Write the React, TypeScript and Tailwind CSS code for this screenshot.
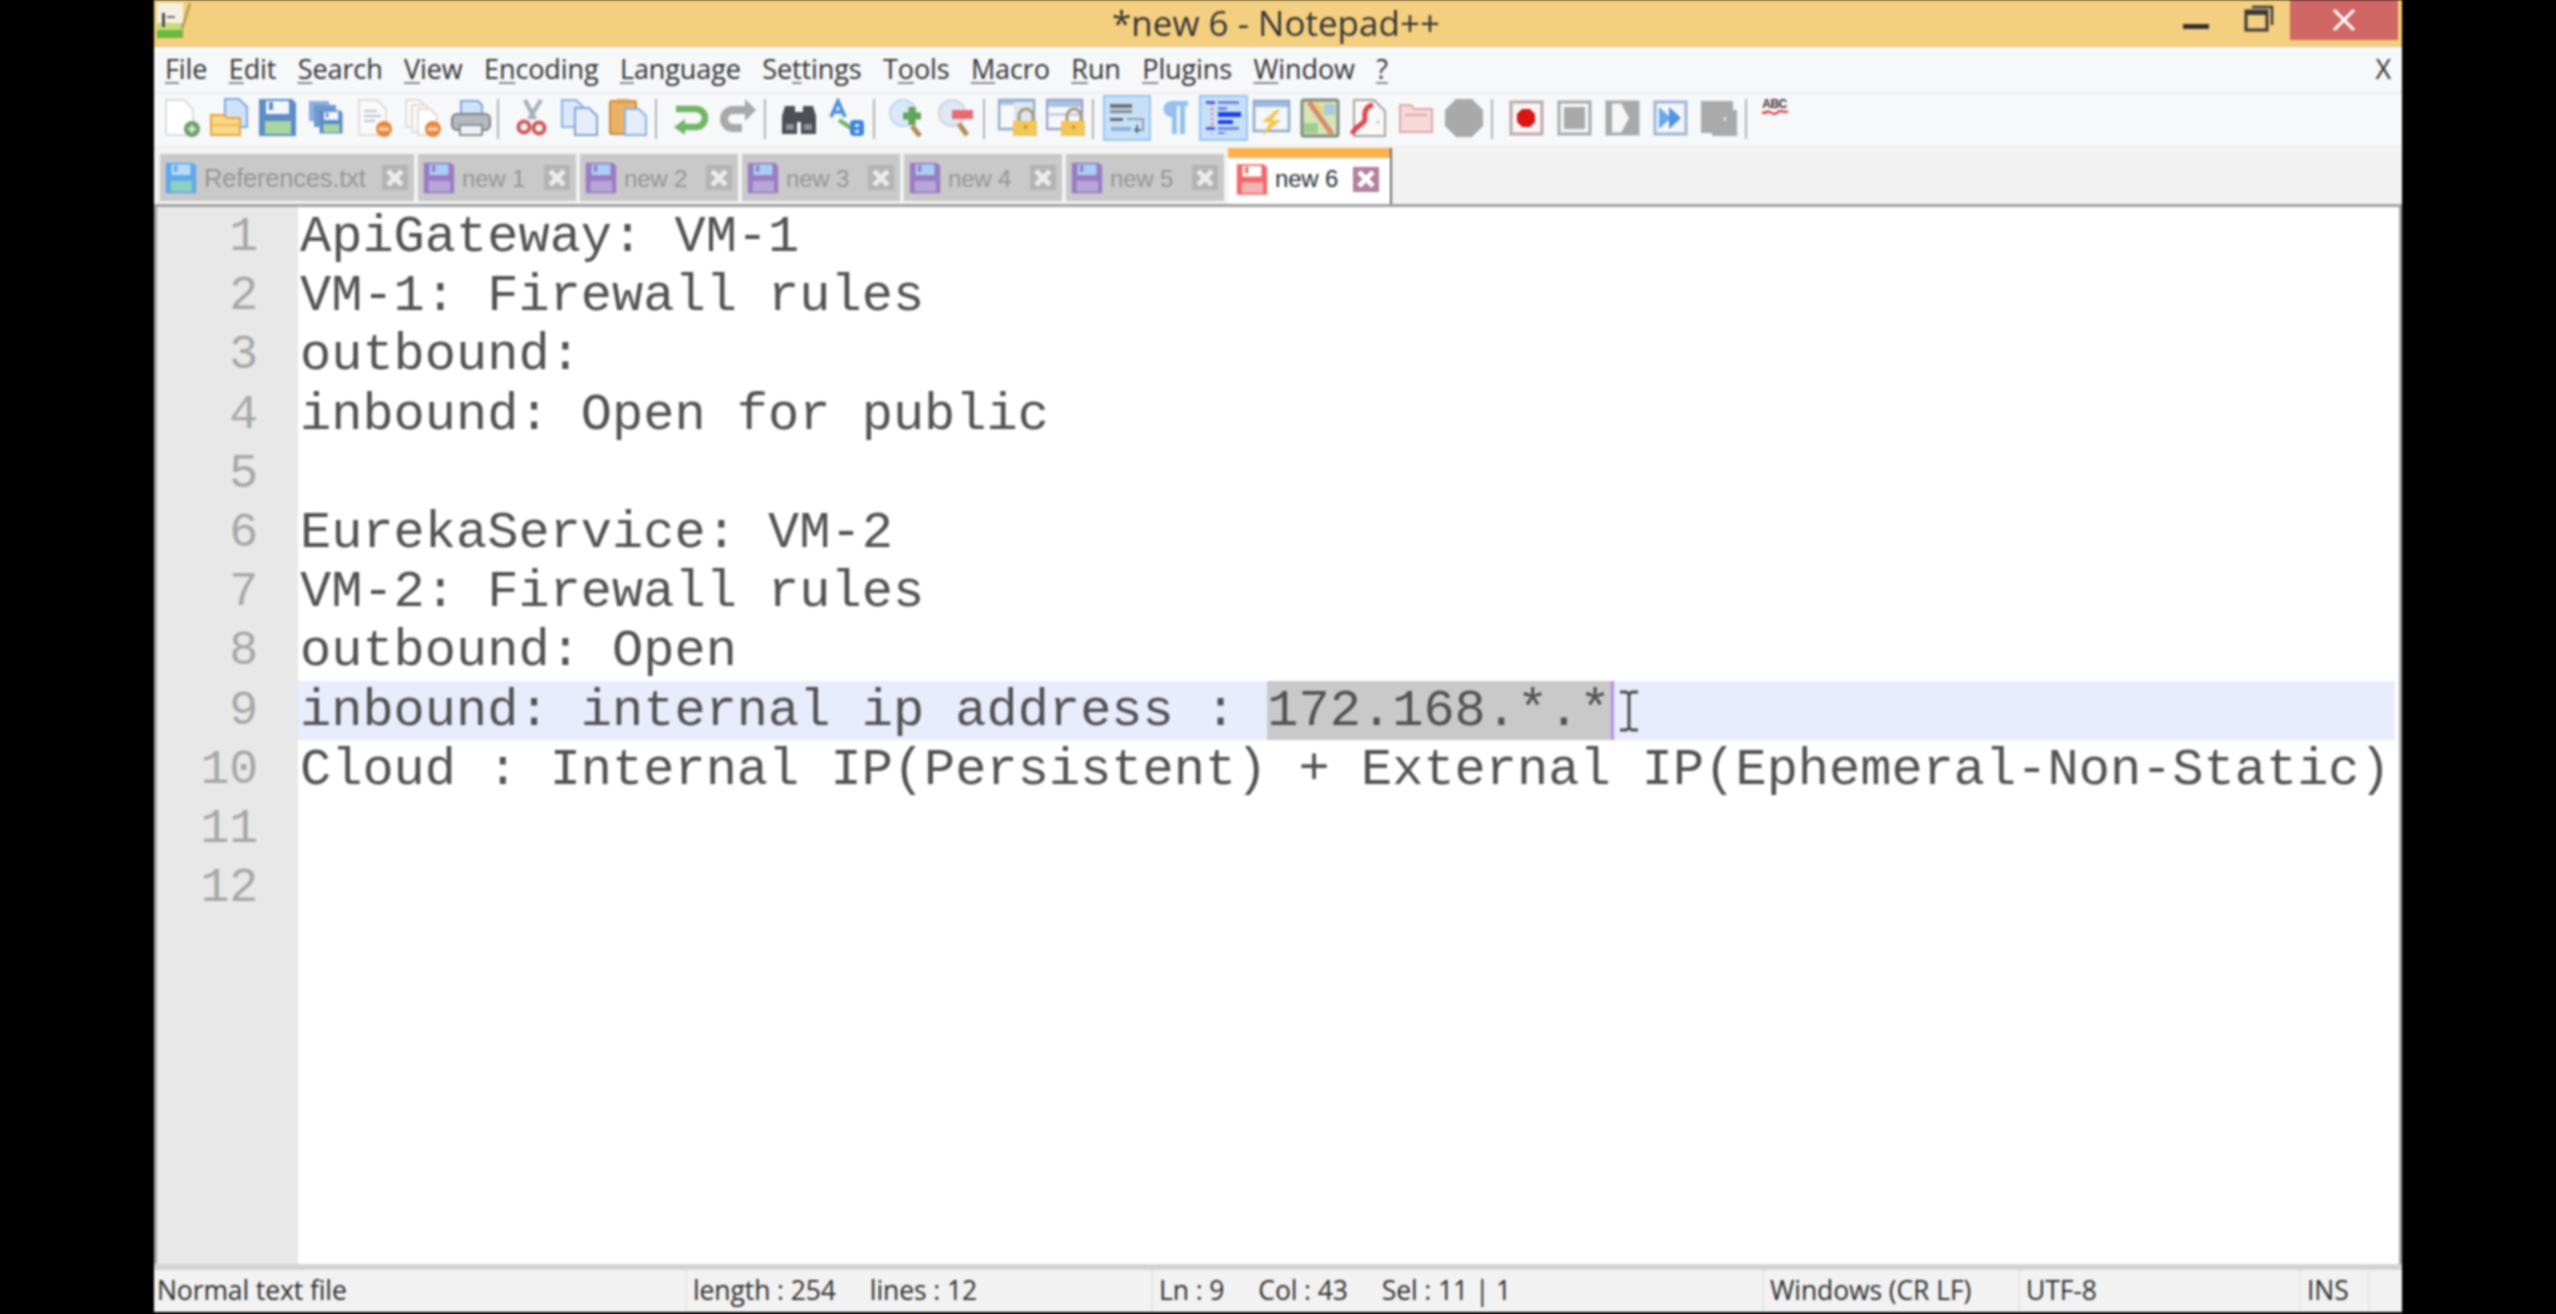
import type { ReactNode } from 'react'

const UI_FONT = "font-['Open_Sans','Noto_Sans',sans-serif]"

const MENUS: [string, string, string][] = [
  ['', 'F', 'ile'],
  ['', 'E', 'dit'],
  ['', 'S', 'earch'],
  ['', 'V', 'iew'],
  ['E', 'n', 'coding'],
  ['', 'L', 'anguage'],
  ['Se', 't', 'tings'],
  ['T', 'o', 'ols'],
  ['', 'M', 'acro'],
  ['', 'R', 'un'],
  ['', 'P', 'lugins'],
  ['', 'W', 'indow'],
  ['', '?', ''],
]

const LINES = [
  'ApiGateway: VM-1',
  'VM-1: Firewall rules',
  'outbound:',
  'inbound: Open for public',
  '',
  'EurekaService: VM-2',
  'VM-2: Firewall rules',
  'outbound: Open',
  null,
  'Cloud : Internal IP(Persistent) + External IP(Ephemeral-Non-Static)',
  '',
  '',
]

function Icon({ children }: { children: ReactNode }) {
  return (
    <svg width="40" height="40" viewBox="0 0 40 40" fill="none">
      {children}
    </svg>
  )
}

function Slot({ children, active }: { children: ReactNode; active?: boolean }) {
  return (
    <div
      className={`w-[48.2px] h-[46px] shrink-0 flex items-center justify-center ${
        active ? 'bg-[#c7e0f8] border-2 border-[#93c8f6]' : ''
      }`}
    >
      {children}
    </div>
  )
}

function Sep() {
  return <div className="w-[2px] h-[40px] mt-[4px] ml-[2px] mr-[9px] shrink-0 bg-[#b4b4b4]" />
}

function Floppy({ body, label, line }: { body: string; label: string; line: string }) {
  return (
    <>
      <path d="M1 1H34L38 5V38H1Z" fill={body} />
      <rect x="8" y="3" width="23" height="13" fill={label} />
      <rect x="11" y="4" width="4" height="8" fill={body} />
      <rect x="7" y="23" width="26" height="13" fill={line} />
    </>
  )
}

function PageShape({ x, y, w, h, fill, stroke }: { x: number; y: number; w: number; h: number; fill: string; stroke: string }) {
  const c = Math.round(w * 0.35)
  return (
    <path
      d={`M${x} ${y}H${x + w - c}L${x + w} ${y + c}V${y + h}H${x}Z`}
      fill={fill}
      stroke={stroke}
      strokeWidth="2"
    />
  )
}

function Lock() {
  return (
    <>
      <path d="M21 23V18A7 7 0 0 1 35 18V23" stroke="#a89a78" strokeWidth="3" fill="none" />
      <rect x="15" y="23" width="24" height="15" fill="#f3c659" />
      <rect x="26" y="27" width="3" height="4" fill="#c79a3a" />
    </>
  )
}

function Frame({ stroke, children }: { stroke: string; children: ReactNode }) {
  return (
    <Icon>
      <rect x="5" y="4" width="31" height="32" fill="#f6f6f6" stroke={stroke} strokeWidth="3" />
      {children}
    </Icon>
  )
}

function Toolbar() {
  return (
    <div className="h-[51px] bg-[#f6f8fa] flex items-start pl-[3.7px] pt-[1px] shrink-0">
      <Slot>
        <Icon>
          <PageShape x={4} y={2} w={27} h={35} fill="#ffffff" stroke="#dcdcdc" />
          <circle cx="30" cy="31" r="8" fill="#6f9f6a" />
          <path d="M30 27V35M26 31H34" stroke="#d9ecd5" strokeWidth="2.5" />
        </Icon>
      </Slot>
      <Slot>
        <Icon>
          <PageShape x={15} y={1} w={22} h={28} fill="#cfe2f8" stroke="#7fa9dc" />
          <path d="M1 17H14L17 20H30V37H1Z" fill="#f7d987" stroke="#e8a33c" strokeWidth="2" />
          <path d="M2 27H30" stroke="#eeb95d" strokeWidth="2" />
        </Icon>
      </Slot>
      <Slot>
        <Icon>
          <Floppy body="#5d8dc8" label="#f4f8fd" line="#a9d6a0" />
        </Icon>
      </Slot>
      <Slot>
        <Icon>
          <rect x="3" y="3" width="20" height="20" fill="#8fb0da" />
          <rect x="8" y="7" width="22" height="22" fill="#6f99cf" />
          <g transform="translate(13 12) scale(0.62)">
            <Floppy body="#5d8dc8" label="#f4f8fd" line="#a9d6a0" />
          </g>
        </Icon>
      </Slot>
      <Slot>
        <Icon>
          <PageShape x={4} y={2} w={27} h={35} fill="#fafafa" stroke="#e2dcd8" />
          <path d="M9 13H22M9 18H26M9 23H20" stroke="#b9c4d2" strokeWidth="2" />
          <circle cx="29" cy="31" r="8" fill="#e68a3c" />
          <rect x="24" y="29" width="10" height="4" fill="#f5c9a0" />
        </Icon>
      </Slot>
      <Slot>
        <Icon>
          <PageShape x={3} y={2} w={20} h={27} fill="#fafafa" stroke="#e2dcd8" />
          <PageShape x={9} y={7} w={20} h={27} fill="#fafafa" stroke="#e2dcd8" />
          <PageShape x={15} y={11} w={19} h={26} fill="#ffffff" stroke="#e2dcd8" />
          <circle cx="30" cy="31" r="8" fill="#e68a3c" />
          <rect x="25" y="29" width="10" height="4" fill="#f5c9a0" />
        </Icon>
      </Slot>
      <Slot>
        <Icon>
          <path d="M10 16V3H27L31 7V16Z" fill="#cfe2f8" stroke="#7fa9dc" strokeWidth="2" />
          <rect x="1" y="16" width="38" height="16" rx="5" fill="#b5b8bc" stroke="#7d8084" strokeWidth="2" />
          <rect x="9" y="27" width="22" height="10" fill="#eef2f6" stroke="#8d9096" strokeWidth="2" />
        </Icon>
      </Slot>
      <Sep />
      <Slot>
        <Icon>
          <path d="M17 21L29 2M23 21L13 2" stroke="#a8afb8" strokeWidth="4" />
          <circle cx="12" cy="29" r="5.5" stroke="#cf5b57" strokeWidth="4" />
          <circle cx="27" cy="30" r="5.5" stroke="#cf5b57" strokeWidth="4" />
        </Icon>
      </Slot>
      <Slot>
        <Icon>
          <PageShape x={2} y={2} w={21} h={27} fill="#dbe8f8" stroke="#8fb2de" />
          <PageShape x={15} y={10} w={22} h={27} fill="#e6eff9" stroke="#7fa6d6" />
        </Icon>
      </Slot>
      <Slot>
        <Icon>
          <rect x="2" y="3" width="26" height="33" rx="2" fill="#eab265" stroke="#c98a3c" strokeWidth="2" />
          <rect x="9" y="1" width="12" height="5" fill="#d9a458" />
          <PageShape x={17} y={11} w={21} h={26} fill="#e3eefa" stroke="#8fb2de" />
        </Icon>
      </Slot>
      <Sep />
      <Slot>
        <Icon>
          <path d="M6 11H26A9 9 0 0 1 26 29H13" stroke="#6fb765" strokeWidth="6.5" fill="none" />
          <path d="M15 21L4 29L15 37Z" fill="#6fb765" />
        </Icon>
      </Slot>
      <Slot>
        <Icon>
          <path d="M33 12H15A9 9 0 0 0 15 30H24" stroke="#a8a8a8" strokeWidth="8" fill="none" />
          <path d="M27 1L38 12L27 23Z" fill="#a8a8a8" />
        </Icon>
      </Slot>
      <Sep />
      <Slot>
        <Icon>
          <path d="M6 8H16V14H24V8H34L37 18V36H22V24H18V36H3V18Z" fill="#4c5054" />
          <rect x="7" y="26" width="8" height="6" fill="#8d9195" />
          <rect x="25" y="26" width="8" height="6" fill="#8d9195" />
        </Icon>
      </Slot>
      <Slot>
        <Icon>
          <path d="M4 19L11 3L18 19M7 14H15" stroke="#4f90dc" strokeWidth="3.5" />
          <path d="M12 22L24 30" stroke="#6fb765" strokeWidth="4" />
          <rect x="23" y="22" width="14" height="16" rx="4" fill="#3f86d8" />
          <rect x="28" y="26" width="4" height="3" fill="#dbe8f8" />
          <rect x="28" y="32" width="4" height="3" fill="#dbe8f8" />
        </Icon>
      </Slot>
      <Sep />
      <Slot>
        <Icon>
          <circle cx="15" cy="15" r="13" fill="#d9e9f9" stroke="#bcd8f3" strokeWidth="2" />
          <path d="M24 28L32 38" stroke="#b58d52" strokeWidth="5" />
          <path d="M24 9V27M15 18H33" stroke="#5fa658" strokeWidth="7" />
        </Icon>
      </Slot>
      <Slot>
        <Icon>
          <circle cx="15" cy="15" r="13" fill="#dde9f6" stroke="#d8cfd8" strokeWidth="2" />
          <path d="M22 26L30 37" stroke="#b58d52" strokeWidth="5" />
          <rect x="15" y="12" width="21" height="9" fill="#ea6a72" />
        </Icon>
      </Slot>
      <Sep />
      <Slot>
        <Icon>
          <rect x="1" y="2" width="35" height="29" fill="#f6f9fd" stroke="#8ea9cc" strokeWidth="2.5" />
          <rect x="2" y="3" width="33" height="4" fill="#a9c3e2" />
          <rect x="16" y="4" width="19" height="22" fill="#dde6f1" />
          <Lock />
        </Icon>
      </Slot>
      <Slot>
        <Icon>
          <rect x="1" y="2" width="35" height="29" fill="#f6f9fd" stroke="#9b9fcc" strokeWidth="2.5" />
          <rect x="2" y="3" width="33" height="6" fill="#a9c3e2" />
          <rect x="2" y="15" width="33" height="3" fill="#c9cfe6" />
          <Lock />
        </Icon>
      </Slot>
      <Sep />
      <Slot active>
        <Icon>
          <rect x="3" y="6" width="22" height="4" fill="#707070" />
          <rect x="3" y="12" width="22" height="3" fill="#8a8a8a" />
          <rect x="3" y="20" width="13" height="3" fill="#6a6a6a" />
          <path d="M20 21H36V32H30" stroke="#8a9fb4" strokeWidth="2" />
          <path d="M4 31H24" stroke="#8fb0d8" strokeWidth="4" />
          <path d="M30 27V35M27 32H33" stroke="#5a6a7a" strokeWidth="2" />
        </Icon>
      </Slot>
      <Slot>
        <Icon>
          <path d="M16 3H33V8H30V36H25V8H22V36H17V19A8 8 0 0 1 16 3Z" fill="#94c2ee" />
        </Icon>
      </Slot>
      <Slot active>
        <Icon>
          <path d="M8 5V36" stroke="#e8607c" strokeWidth="2" strokeDasharray="2 3" />
          <rect x="2" y="3" width="9" height="3" fill="#5560d8" />
          <rect x="14" y="3" width="21" height="3" fill="#6f8ae0" />
          <rect x="14" y="9" width="9" height="3" fill="#6f8ae0" />
          <rect x="14" y="14" width="23" height="5" fill="#1f3fe8" />
          <rect x="14" y="22" width="15" height="4" fill="#1f3fe8" />
          <rect x="2" y="29" width="9" height="3" fill="#5560d8" />
          <rect x="14" y="29" width="21" height="3" fill="#6f8ae0" />
          <rect x="14" y="34" width="7" height="2" fill="#6f8ae0" />
        </Icon>
      </Slot>
      <Slot>
        <Icon>
          <rect x="2" y="3" width="35" height="30" fill="#f3f6fa" stroke="#8ea9cc" strokeWidth="2.5" />
          <rect x="3" y="4" width="33" height="5" fill="#9dbde2" />
          <path d="M24 12L10 24H18L10 38L29 22H20L28 12Z" fill="#f0c850" />
        </Icon>
      </Slot>
      <Slot>
        <Icon>
          <rect x="2" y="2" width="36" height="36" rx="2" fill="#d8e4b8" stroke="#7f8a80" strokeWidth="3" />
          <path d="M9 4L32 36" stroke="#d88a6a" strokeWidth="5" />
          <rect x="24" y="6" width="11" height="11" fill="#a7cbe4" />
          <rect x="4" y="25" width="14" height="10" fill="#9ccf8a" />
          <path d="M16 5L24 15" stroke="#f0d060" strokeWidth="3" />
        </Icon>
      </Slot>
      <Slot>
        <Icon>
          <PageShape x={6} y={2} w={31} h={36} fill="#fbf9f7" stroke="#a8a4a4" />
          <path d="M25 7C18 8 16 14 17 20S9 26 4 36" stroke="#d84a52" strokeWidth="5" fill="none" />
          <circle cx="30" cy="24" r="1.5" fill="#a8c8a0" />
        </Icon>
      </Slot>
      <Slot>
        <Icon>
          <path d="M4 7H15L18 11H36V34H4Z" fill="#f6dada" stroke="#e3a6a6" strokeWidth="2" />
          <path d="M9 17H31" stroke="#e3a6a6" strokeWidth="2" />
        </Icon>
      </Slot>
      <Slot>
        <Icon>
          <path d="M12 1H28L39 12V28L28 39H12L1 28V12Z" fill="#a9a9a9" />
        </Icon>
      </Slot>
      <Sep />
      <Slot>
        <Frame stroke="#bda9a6">
          <path d="M16 11H24L29 16V24L24 29H16L11 24V16Z" fill="#dc1414" />
        </Frame>
      </Slot>
      <Slot>
        <Frame stroke="#a9a9a9">
          <rect x="10" y="9" width="21" height="22" fill="#a9a9a9" />
        </Frame>
      </Slot>
      <Slot>
        <Frame stroke="#a9a9a9">
          <rect x="5" y="5" width="5" height="30" fill="#a9a9a9" />
          <path d="M19 5H36V35H19L27 20Z" fill="#a9a9a9" />
        </Frame>
      </Slot>
      <Slot>
        <Frame stroke="#9db5d8">
          <path d="M9 9L21 20L9 31Z" fill="#6aa8ee" />
          <path d="M19 9L31 20L19 31Z" fill="#4f94e6" />
        </Frame>
      </Slot>
      <Slot>
        <Icon>
          <path d="M3 3H35V12H39V38H14V35H3Z" fill="#aaaaaa" />
          <rect x="26" y="19" width="2" height="4" fill="#eeeeee" />
        </Icon>
      </Slot>
      <Sep />
      <div className="w-[26px] h-[46px] ml-[6px] shrink-0 flex flex-col items-center pt-[3px]">
        <span className="font-['Liberation_Sans',sans-serif] font-bold text-[12px] leading-[12px] tracking-[-0.5px] text-[#44333a]">
          ABC
        </span>
        <svg width="26" height="5" viewBox="0 0 26 5" fill="none">
          <path d="M0 2C3 5 5 0 8 2S13 5 16 2S22 4 26 1" stroke="#e0282c" strokeWidth="2" />
        </svg>
      </div>
    </div>
  )
}

function TabClose({ active }: { active?: boolean }) {
  return (
    <div
      className={`w-[26px] h-[25px] shrink-0 flex items-center justify-center ${
        active ? 'bg-[#b57f9e]' : 'bg-[#b4b4b4]'
      }`}
    >
      <svg width="20" height="20" viewBox="0 0 20 20" fill="none">
        <path d="M3 3L17 17M17 3L3 17" stroke={active ? '#ffffff' : '#ececec'} strokeWidth="5" />
      </svg>
    </div>
  )
}

function Tab({ name, wide, body, label, line }: { name: string; wide?: boolean; body: string; label: string; line: string }) {
  return (
    <div
      className={`h-[47px] shrink-0 bg-[#c9c9c9] flex items-center pl-[5px] pr-[6px] mt-[9px] ${
        wide ? 'w-[254px]' : 'w-[158px]'
      }`}
    >
      <svg width="32" height="32" viewBox="0 0 39 39" fill="none" className="shrink-0">
        <Floppy body={body} label={label} line={line} />
      </svg>
      <span className={`ml-[7px] mt-[2px] flex-1 tracking-[-0.2px] whitespace-pre text-[#969696] ${wide ? 'text-[25.5px]' : 'text-[24px]'}`}>
        {name}
      </span>
      <TabClose />
    </div>
  )
}

function TabBar() {
  return (
    <div className="h-[59px] bg-[#f2f2f2] flex pl-[6px] gap-[4px] shrink-0 font-['Liberation_Sans',sans-serif]">
      <Tab name="References.txt" wide body="#5fa9ec" label="#b7dcfa" line="#8ccfc4" />
      {['new 1', 'new 2', 'new 3', 'new 4', 'new 5'].map(n => (
        <Tab key={n} name={n} body="#9a7cc4" label="#a9d0f4" line="#b9a6d8" />
      ))}
      <div className="w-[164px] h-[56px] mt-[3px] shrink-0 flex flex-col bg-white border-r-2 border-[#6e6e6e]">
        <div className="h-[10px] bg-[#fbb14d] shrink-0" />
        <div className="flex-1 flex items-center pl-[8px] pb-[4px]">
          <svg width="32" height="33" viewBox="0 0 39 39" fill="none" className="shrink-0">
            <Floppy body="#ee6a6c" label="#ffffff" line="#f6b3b3" />
          </svg>
          <span className="ml-[7px] text-[24px] tracking-[-0.2px] text-[#2b3440]">new 6</span>
          <div className="ml-[15px]">
            <TabClose active />
          </div>
        </div>
      </div>
    </div>
  )
}

function Editor() {
  return (
    <div className="flex-1 min-h-0 flex bg-white border-t-[3px] border-x-[3px] border-[#a3a3a3] font-['Liberation_Mono',monospace] relative">
      <div className="w-[141px] shrink-0 bg-[#e8e8e8] pr-[40px] text-right text-[48px] leading-[61px] text-[#a8a8a8]">
        {LINES.map((_, i) => (
          <div key={i} className="h-[59.2px]">
            {i + 1}
          </div>
        ))}
      </div>
      <div className="flex-1 min-w-0 text-[52px] leading-[61px] text-[#525252] whitespace-pre">
        {LINES.map((l, i) =>
          l === null ? (
            <div key={i} className="h-[59.2px] bg-[#e9ecfd] mr-[4px] pl-[2px] flex">
              <span>inbound: internal ip address : </span>
              <span className="h-[59.2px] bg-[#c9c9c9] border-r-[3px] border-[#b68ef0] -mr-[3px]">172.168.*.*</span>
            </div>
          ) : (
            <div key={i} className="h-[59.2px] pl-[2px]">
              {l}
            </div>
          ),
        )}
      </div>
      <svg
        width="20"
        height="42"
        viewBox="0 0 20 42"
        fill="none"
        className="absolute left-[1462px] top-[483px]"
      >
        <path d="M1 2H7L10 4L13 2H19M1 40H7L10 38L13 40H19M10 4V38" stroke="#4a4a44" strokeWidth="3" />
      </svg>
    </div>
  )
}

function StatusCell({ w, children }: { w: string; children: ReactNode }) {
  return (
    <div className={`${w} h-full shrink-0 border-l-2 border-[#e6e6e6] pl-[6px] flex items-center whitespace-pre`}>
      {children}
    </div>
  )
}

function StatusBar() {
  return (
    <div className={`h-[42px] shrink-0 bg-[#f2f2f2] border-t-[6px] border-[#d4d4d4] box-content flex items-center text-[26.5px] tracking-[-0.1px] text-[#2e2e2e] ${UI_FONT}`}>
      <div className="w-[531px] shrink-0 pl-[3px]">Normal text file</div>
      <StatusCell w="w-[466px]">length : 254     lines : 12</StatusCell>
      <StatusCell w="w-[611px]">Ln : 9     Col : 43     Sel : 11 | 1</StatusCell>
      <StatusCell w="w-[256px]">Windows (CR LF)</StatusCell>
      <StatusCell w="w-[281px]">UTF-8</StatusCell>
      <StatusCell w="w-[69px]">INS</StatusCell>
      <div className="flex-1 h-full border-l-2 border-[#e6e6e6]" />
    </div>
  )
}

export default function App() {
  return (
    <div className="w-[2556px] h-[1314px] bg-black flex justify-center overflow-hidden">
      <div className="w-[2248px] h-[1312px] flex flex-col bg-white blur-[0.8px]">
        <div className={`h-[47px] shrink-0 bg-[#f3cf7f] border-b border-[#e6c274] flex items-start relative ${UI_FONT}`}>
          <svg width="38" height="38" viewBox="0 0 38 38" fill="none" className="ml-[2px] mt-[1px]">
            <rect x="1" y="2" width="26" height="35" fill="#f4f1e4" />
            <rect x="1" y="28" width="26" height="9" fill="#6cb83c" />
            <rect x="1" y="22" width="26" height="7" fill="#c6dc78" />
            <rect x="6" y="12" width="3" height="14" fill="#4a4a4a" />
            <rect x="11" y="15" width="8" height="2" fill="#6a6a6a" />
            <path d="M34 2L26 28" stroke="#b89a4a" strokeWidth="2.5" />
          </svg>
          <div className="absolute left-[958px] top-[1px] h-[44px] flex items-center text-[35px] text-[#333333] whitespace-pre">
            *new 6 - Notepad++
          </div>
          <div className="ml-auto flex items-start pr-[4px]">
            <div className="w-[26px] h-[5px] mt-[24px] bg-[#333333]" />
            <svg width="30" height="28" viewBox="0 0 30 28" fill="none" className="ml-[35px] mt-[4px]">
              <rect x="2" y="7" width="21" height="19" stroke="#3a3a3a" strokeWidth="3" />
              <path d="M2 9H23" stroke="#3a3a3a" strokeWidth="4" />
              <path d="M8 3H28V21" stroke="#3a3a3a" strokeWidth="2.5" />
            </svg>
            <div className="w-[108px] h-[40px] ml-[16px] bg-[#d16765] flex items-center justify-center">
              <svg width="24" height="22" viewBox="0 0 24 22" fill="none">
                <path d="M2 1L22 21M22 1L2 21" stroke="#ffffff" strokeWidth="3" />
              </svg>
            </div>
          </div>
        </div>
        <div className={`h-[44px] shrink-0 bg-[#f6f8fa] border-b-[3px] border-[#f1f1f1] box-content flex items-center pl-[11px] gap-[21.4px] text-[27px] tracking-[-0.1px] text-[#333333] ${UI_FONT}`}>
          {MENUS.map(([a, k, b]) => (
            <span key={a + k + b} className="whitespace-pre">
              {a}
              <span className="underline underline-offset-[3px] decoration-[#888888]">{k}</span>
              {b}
            </span>
          ))}
          <span className="ml-auto mr-[11px]">X</span>
        </div>
        <Toolbar />
        <TabBar />
        <Editor />
        <StatusBar />
      </div>
    </div>
  )
}
